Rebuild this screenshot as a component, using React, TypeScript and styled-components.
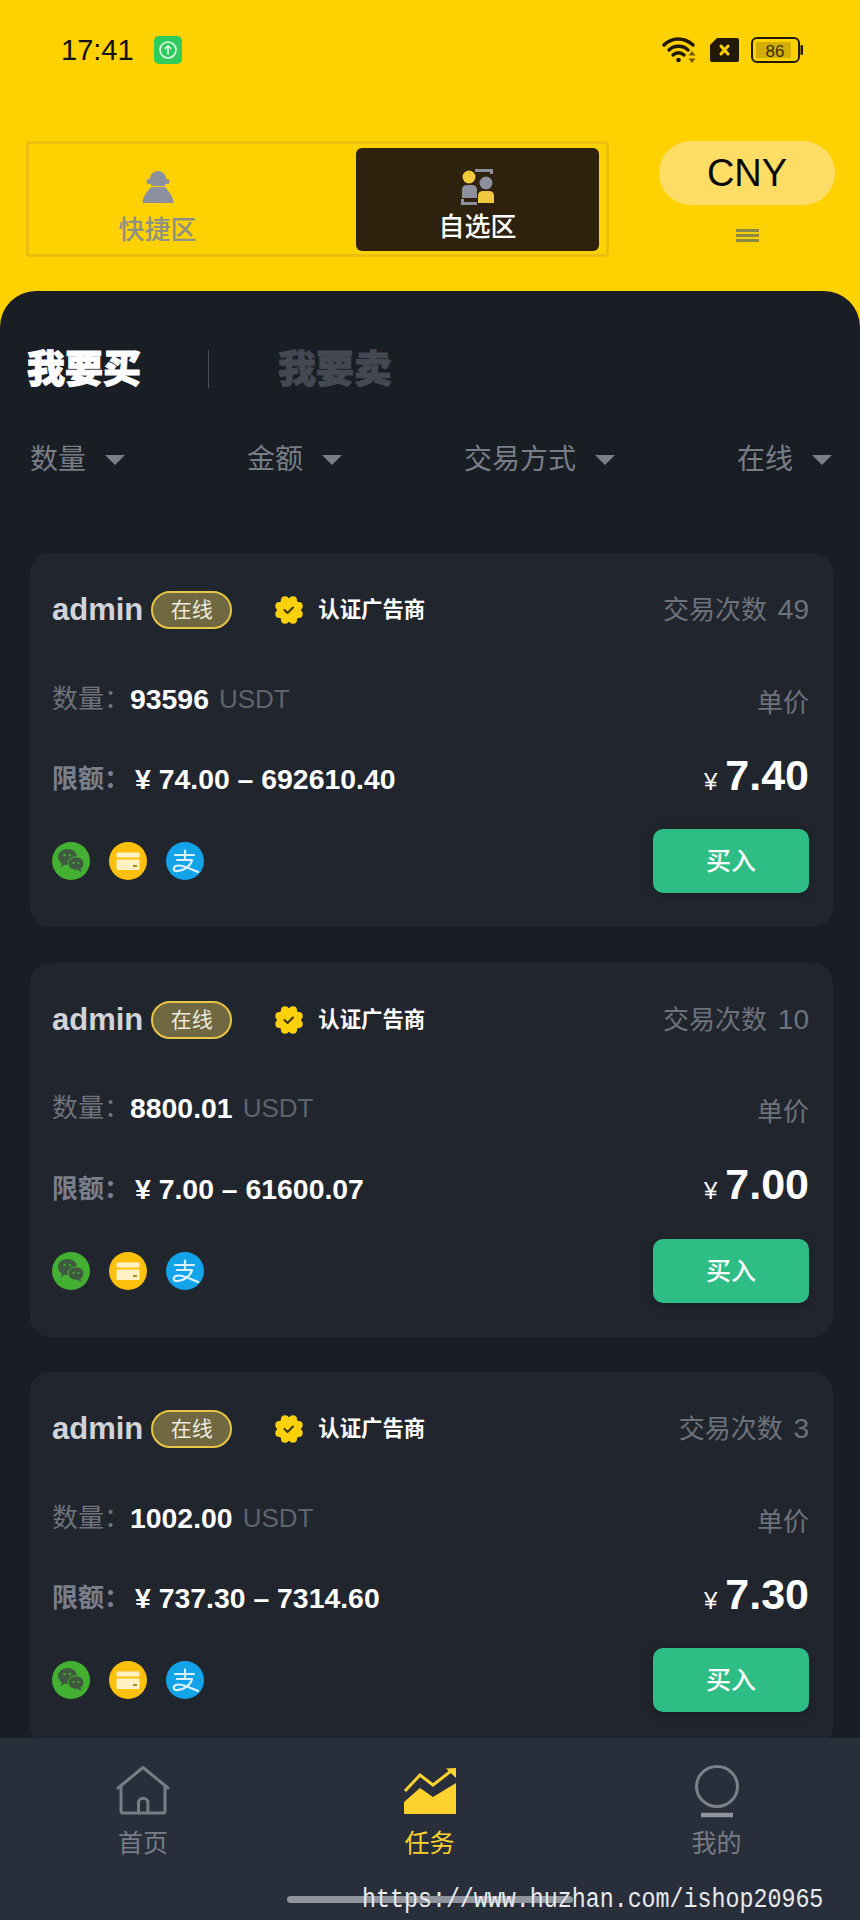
import React from "react";
import styled, { createGlobalStyle } from "styled-components";

const Global = createGlobalStyle`
  html, body { margin: 0; padding: 0; background: #fed200; }
  body { font-family: "Liberation Sans", "Noto Sans CJK SC", sans-serif; }
  * { box-sizing: border-box; }
`;

const Page = styled.div`
  width: 860px; height: 1920px; background: #fed200; display: flex; flex-direction: column; overflow: hidden; position: relative;
`;
const Status = styled.div`
  height: 100px; padding: 36px 57px 0 61px; display: flex; justify-content: space-between; align-items: flex-start;
`;
const StatusLeft = styled.div`display: flex; align-items: center; gap: 20px; height: 28px;`;
const Time = styled.span`font-size: 29px; line-height: 28px; color: #111;`;
const StatusRight = styled.div`display: flex; align-items: center; gap: 12px; height: 28px;`;
const Header = styled.div`
  height: 191px; padding: 41px 25px 0 26px; display: flex; justify-content: space-between; align-items: flex-start;
`;
const TabBox = styled.div`
  width: 583px; height: 116px; border: 3px solid #ebbf10; border-radius: 4px; padding: 4px 7px; display: flex; justify-content: space-between;
`;
const ZoneTab = styled.div<{ $active?: boolean }>`
  width: 243px; height: 103px; border-radius: 6px; background: ${(p) => (p.$active ? "#2e210d" : "transparent")};
  color: ${(p) => (p.$active ? "#fff" : "#8e9183")}; display: flex; flex-direction: column; align-items: center; padding-top: ${(p) => (p.$active ? 20 : 23)}px;
  font-size: 26px; line-height: 30px; font-weight: 500;
`;
const ZoneIcon = styled.svg<{ $h: number }>`display: block; height: ${(p) => p.$h}px; width: 36px; margin-bottom: ${(p) => 44 - p.$h}px;`;
const CurrencyCol = styled.div`display: flex; flex-direction: column; align-items: center; width: 176px;`;
const CurrencyPill = styled.div`
  width: 176px; height: 64px; border-radius: 32px; background: #fedd66; color: #0b0b0b; font-size: 38px; line-height: 64px; text-align: center;
`;
const MenuLines = styled.div`
  width: 23px; height: 13px; margin-top: 24px; border-top: 3px solid #8d8a47; border-bottom: 3px solid #8d8a47;
  &::after { content: ""; display: block; height: 3px; margin-top: 2px; background: #8d8a47; }
`;
const Sheet = styled.div`
  flex: 1; min-height: 0; overflow: hidden; background: #191d24; border-radius: 36px 36px 0 0; padding: 58px 28px 0 30px;
`;
const Trade = styled.div`display: flex; align-items: center; height: 40px; margin-left: -3px;`;
const TradeTab = styled.div<{ $active?: boolean }>`
  font-size: 38px; line-height: 40px; font-weight: 900; color: ${(p) => (p.$active ? "#fff" : "#434852")}; width: 114px;
  -webkit-text-stroke: 1px ${(p) => (p.$active ? "#fff" : "#434852")};
`;
const TradeDivider = styled.div`width: 1px; height: 38px; background: #4a4f57; margin: 0 69px 0 67px;`;
const Filters = styled.div`
  display: flex; justify-content: space-between; margin-top: 55px; height: 32px; align-items: center;
`;
const Filter = styled.div`
  display: flex; align-items: center; gap: 19px; font-size: 28px; line-height: 32px; color: #7a7e86;
  &::after { content: ""; width: 0; height: 0; border-left: 10px solid transparent; border-right: 10px solid transparent; border-top: 10px solid #7a7e86; }
`;
const List = styled.div`display: flex; flex-direction: column; gap: 35.5px; margin-top: 77px; width: 803px;`;
const Card = styled.div`
  flex: none; height: 374px; border-radius: 20px; background: #21252e; padding: 38px 24px 0 22px;
`;
const Row = styled.div<{ $h: number; $mt?: number }>`
  display: flex; justify-content: space-between; align-items: center; height: ${(p) => p.$h}px; margin-top: ${(p) => p.$mt ?? 0}px;
`;
const Group = styled.div<{ $up?: number }>`display: flex; align-items: center; margin-top: ${(p) => -(p.$up ?? 0)}px;`;
const Name = styled.span`font-size: 31px; font-weight: 700; color: #d2d4d9; line-height: 38px;`;
const OnlinePill = styled.span`
  width: 81px; height: 38px; margin-left: 8px; border: 2px solid #e8c546; border-radius: 19px; background: #6f6840; color: #eceadc;
  font-size: 21px; line-height: 34px; text-align: center;
`;
const Verified = styled.span`
  margin-left: 14px; font-size: 21.4px; font-weight: 700; color: #fff; line-height: 38px;
`;
const BadgeIcon = styled.svg`width: 30px; height: 30px; margin-left: 42px; display: block;`;
const Muted = styled.span<{ $down?: number }>`font-size: 26px; line-height: 38px; color: #6e727a; margin-top: ${(p) => p.$down ?? 0}px;`;
const Count = styled.span`font-size: 28px; margin-left: 3px;`;
const Label = styled.span<{ $bold?: boolean }>`
  font-size: 26px; line-height: 38px; color: ${(p) => (p.$bold ? "#7a7f89" : "#6e727a")}; font-weight: ${(p) => (p.$bold ? 700 : 400)}; width: 78px;
`;
const Amount = styled.span`font-size: 28.4px; font-weight: 700; color: #fff; line-height: 38px; white-space: pre;`;
const Unit = styled.span`font-size: 26px; color: #5e636c; line-height: 38px; margin-left: 10px;`;
const LimitAmount = styled(Amount)`margin-left: 5px;`;
const Price = styled.div`display: flex; align-items: baseline; color: #fff; font-weight: 700; font-size: 43px; line-height: 44px; margin-top: -6px;`;
const Yen = styled.span`font-size: 24px; font-weight: 400; margin-right: 8px;`;
const Pays = styled.div`display: flex; gap: 19px;`;
const PayIcon = styled.svg`width: 38px; height: 38px; display: block;`;
const BuyButton = styled.div`
  width: 156px; height: 64px; border-radius: 10px; background: #2dbd85; color: #fff; font-size: 25px; line-height: 64px; text-align: center; font-weight: 500;
  box-shadow: 0 2px 8px rgba(0, 0, 0, 0.25);
`;
const Nav = styled.div`
  flex: none; height: 182px; background: #282f3a; display: grid; grid-template-columns: 286px 287px 287px; padding-top: 27px;
`;
const NavItem = styled.div<{ $active?: boolean }>`
  display: flex; flex-direction: column; align-items: center; color: ${(p) => (p.$active ? "#fdd12e" : "#777c85")}; font-size: 25px; line-height: 32px;
`;
const NavIcon = styled.svg`width: 56px; height: 56px; display: block; margin-bottom: 6px;`;
const HomeBar = styled.div`
  position: absolute; left: 287px; top: 1896px; width: 286px; height: 7px; border-radius: 4px; background: #8f939c;
`;
const Watermark = styled.div`
  position: absolute; left: 362px; top: 1884px; font-family: "Liberation Mono", monospace; font-size: 23.3px; line-height: 28px; color: #e8eaee; white-space: pre;
  transform: scaleY(1.15); transform-origin: top left;
`;

const offers = [
  { trades: 49, qty: "93596", limit: "¥ 74.00 – 692610.40", price: "7.40" },
  { trades: 10, qty: "8800.01", limit: "¥ 7.00 – 61600.07", price: "7.00" },
  { trades: 3, qty: "1002.00", limit: "¥ 737.30 – 7314.60", price: "7.30" },
];

const Wifi = () => (
  <svg width="36" height="28" viewBox="0 0 36 28" fill="none" stroke="#231a05" strokeWidth="3.4" strokeLinecap="round">
    <path d="M2 9C10 1 22 1 31 9" />
    <path d="M7 14C12 9 21 9 26 14" />
    <path d="M11 19C14 16 19 16 22 19" />
    <circle cx="16.5" cy="24" r="2.3" fill="#231a05" stroke="none" />
    <path d="M30 15l3.5 4.4h-7zM30 27l3.5-4.4h-7z" fill="#6d5a05" stroke="none" />
  </svg>
);
const Sim = () => (
  <svg width="29" height="24" viewBox="0 0 29 24">
    <path d="M7 0H27a2 2 0 0 1 2 2V22a2 2 0 0 1-2 2H2a2 2 0 0 1-2-2V7z" fill="#231a05" />
    <path d="M11 8l7 8M18 8l-7 8" stroke="#fed200" strokeWidth="3" strokeLinecap="round" />
  </svg>
);
const Battery = () => (
  <svg width="52" height="26" viewBox="0 0 52 26">
    <rect x="1" y="1" width="47" height="24" rx="5" fill="none" stroke="#231a05" strokeWidth="2" />
    <path d="M5 5H40V21H5z" fill="#d2ae07" />
    <rect x="49.5" y="8" width="2.5" height="10" rx="1" fill="#231a05" />
    <text x="24" y="19.5" textAnchor="middle" fontFamily="'Liberation Sans Narrow','Liberation Sans',sans-serif" fontSize="17" fill="#3b2f08">86</text>
  </svg>
);
const BadgeGlyph = () => {
  const lobes = Array.from({ length: 8 }, (_, i) => (i * Math.PI) / 4 + Math.PI / 8);
  return (
    <BadgeIcon viewBox="0 0 30 30">
      <circle cx="15" cy="15" r="12" fill="#fdd10a" />
      {lobes.map((a) => (
        <circle key={a} cx={15 + 10.5 * Math.cos(a)} cy={15 + 10.5 * Math.sin(a)} r="4" fill="#fdd10a" />
      ))}
      <path d="M10.5 15l3 3 5.5-5.5" fill="none" stroke="#3a3210" strokeWidth="2" strokeLinecap="round" strokeLinejoin="round" />
    </BadgeIcon>
  );
};
const WeChat = () => (
  <PayIcon viewBox="0 0 38 38">
    <circle cx="19" cy="19" r="19" fill="#43b034" />
    <ellipse cx="15.5" cy="15" rx="9.5" ry="8" fill="#3f5a3f" />
    <path d="M10 20l-1 5 5-3z" fill="#3f5a3f" />
    <ellipse cx="24" cy="21.5" rx="8" ry="6.8" fill="#3f5a3f" stroke="#43b034" strokeWidth="1" />
    <path d="M28 26l2 4-5-2z" fill="#3f5a3f" />
    <circle cx="12.5" cy="13" r="1.2" fill="#43b034" /><circle cx="18" cy="13" r="1.2" fill="#43b034" />
    <circle cx="21.5" cy="21" r="1.1" fill="#43b034" /><circle cx="26.5" cy="21" r="1.1" fill="#43b034" />
  </PayIcon>
);
const BankCard = () => (
  <PayIcon viewBox="0 0 38 38">
    <circle cx="19" cy="19" r="19" fill="#fdc00d" />
    <rect x="7.5" y="10.5" width="23" height="5" rx="1" fill="#fff1c4" />
    <rect x="7.5" y="17.5" width="23" height="10.5" rx="1" fill="#fff1c4" />
    <rect x="24" y="23" width="4" height="2" fill="#a98a1d" />
  </PayIcon>
);
const Alipay = () => (
  <PayIcon viewBox="0 0 38 38">
    <circle cx="19" cy="19" r="19" fill="#12a3e8" />
    <path d="M9 13H28M19 8.500V17M11 18H26C24.500 24 17 30 9.500 29C6.500 28 7.500 23.500 12 23.500C18 23.500 25 27 32 30" fill="none" stroke="#d9f1fb" strokeWidth="2.2" strokeLinecap="round" strokeLinejoin="round" />
  </PayIcon>
);

export default function App() {
  return (
    <Page>
      <Global />
      <Status>
        <StatusLeft>
          <Time>17:41</Time>
          <svg width="28" height="28" viewBox="0 0 28 28">
            <rect width="28" height="28" rx="5" fill="#2fcb5c" />
            <circle cx="14" cy="14" r="8" fill="none" stroke="#e7fbe9" strokeWidth="1.6" />
            <path d="M14 18.500V10M10.800 13L14 9.800 17.200 13" fill="none" stroke="#e7fbe9" strokeWidth="1.6" />
          </svg>
        </StatusLeft>
        <StatusRight>
          <Wifi />
          <Sim />
          <Battery />
        </StatusRight>
      </Status>
      <Header>
        <TabBox>
          <ZoneTab>
            <ZoneIcon $h={34} viewBox="0 0 36 34">
              <path d="M10 8a8 8 0 0 1 16 0z" fill="#8b909c" />
              <rect x="6.500" y="8" width="23" height="5" rx="2.500" fill="#8b909c" />
              <path d="M11 13H25V15H11z" fill="#8b909c" />
              <path d="M11 16H25C28 20 33 24 33.500 32H2.500C3 24 8 20 11 16z" fill="#8b909c" />
            </ZoneIcon>
            快捷区
          </ZoneTab>
          <ZoneTab $active>
            <ZoneIcon $h={38} viewBox="0 0 36 38">
              <circle cx="9" cy="9" r="6.500" fill="#f0c93c" />
              <path d="M15 1H33V6H30V4H15z" fill="#8b909c" />
              <circle cx="26" cy="15" r="6.500" fill="#8b909c" />
              <path d="M2 21a5 5 0 0 1 5-4h5a5 5 0 0 1 5 4V30H2z" fill="#8b909c" />
              <path d="M1 31H4V34H17V37H1z" fill="#8b909c" />
              <path d="M18 27a5 5 0 0 1 5-4h6a5 5 0 0 1 5 4V35H18z" fill="#f0c93c" />
            </ZoneIcon>
            自选区
          </ZoneTab>
        </TabBox>
        <CurrencyCol>
          <CurrencyPill>CNY</CurrencyPill>
          <MenuLines />
        </CurrencyCol>
      </Header>
      <Sheet>
        <Trade>
          <TradeTab $active>我要买</TradeTab>
          <TradeDivider />
          <TradeTab>我要卖</TradeTab>
        </Trade>
        <Filters>
          <Filter>数量</Filter>
          <Filter>金额</Filter>
          <Filter>交易方式</Filter>
          <Filter>在线</Filter>
        </Filters>
        <List>
          {offers.map((o) => (
            <Card key={o.price}>
              <Row $h={38}>
                <Group>
                  <Name>admin</Name>
                  <OnlinePill>在线</OnlinePill>
                  <BadgeGlyph />
                  <Verified>认证广告商</Verified>
                </Group>
                <Muted>
                  交易次数
                  <Count> {o.trades}</Count>
                </Muted>
              </Row>
              <Row $h={40} $mt={52}>
                <Group $up={5}>
                  <Label>数量：</Label>
                  <Amount>{o.qty}</Amount>
                  <Unit>USDT</Unit>
                </Group>
                <Muted $down={3}>单价</Muted>
              </Row>
              <Row $h={40} $mt={40}>
                <Group $up={4}>
                  <Label $bold>限额：</Label>
                  <LimitAmount>{o.limit}</LimitAmount>
                </Group>
                <Price>
                  <Yen>¥</Yen>
                  {o.price}
                </Price>
              </Row>
              <Row $h={64} $mt={28}>
                <Pays>
                  <WeChat />
                  <BankCard />
                  <Alipay />
                </Pays>
                <BuyButton>买入</BuyButton>
              </Row>
            </Card>
          ))}
        </List>
      </Sheet>
      <Nav>
        <NavItem>
          <NavIcon viewBox="0 0 56 56" fill="none" stroke="#777c85" strokeWidth="3" strokeLinejoin="round" strokeLinecap="round">
            <path d="M3 23L28 2.500 53 23" />
            <path d="M6 21V46a2 2 0 0 0 2 2H48a2 2 0 0 0 2-2V21" />
            <path d="M23.500 48V38a4.700 4.700 0 0 1 9.400 0V48" />
          </NavIcon>
          首页
        </NavItem>
        <NavItem $active>
          <NavIcon viewBox="0 0 56 56">
            <path d="M2 48V37L18 23 31 32 54 18V49H3a1 1 0 0 1-1-1z" fill="#fdd12e" />
            <path d="M3 26L18 10 31 20 49 6" fill="none" stroke="#fdd12e" strokeWidth="3" />
            <path d="M44 3.500L54 3V13z" fill="#fdd12e" />
          </NavIcon>
          任务
        </NavItem>
        <NavItem>
          <NavIcon viewBox="0 0 56 56" fill="none" stroke="#7b8089">
            <ellipse cx="28" cy="21.500" rx="20.500" ry="20" strokeWidth="3" />
            <path d="M12 50H44" strokeWidth="4.500" stroke="#8f939c" />
          </NavIcon>
          我的
        </NavItem>
      </Nav>
      <HomeBar />
      <Watermark>https://www.huzhan.com/ishop20965</Watermark>
    </Page>
  );
}
